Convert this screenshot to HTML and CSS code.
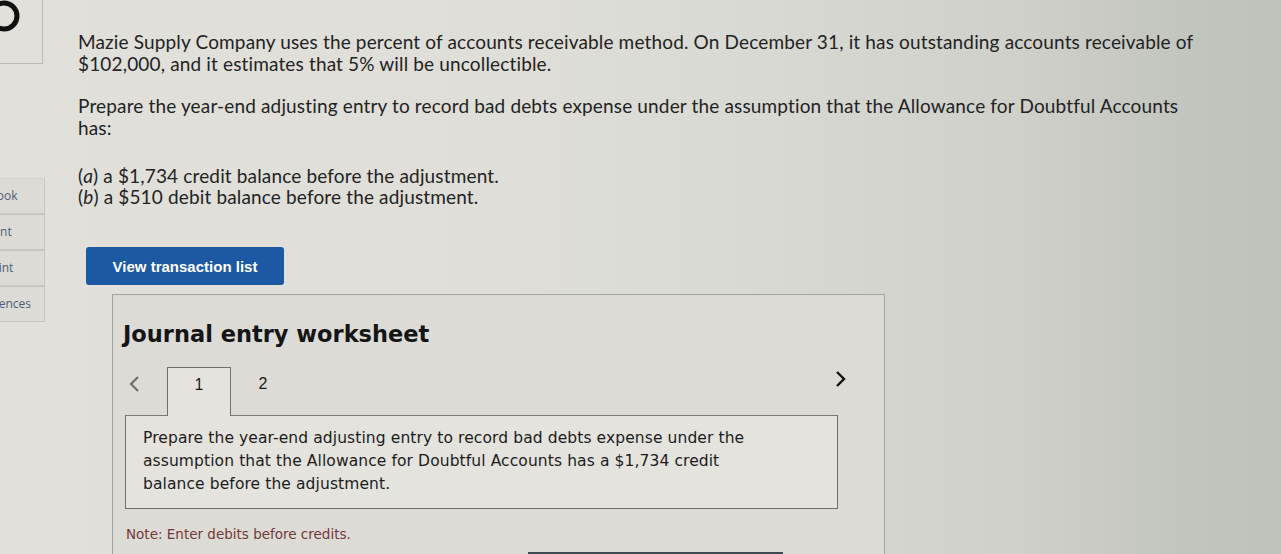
FILE: index.html
```html
<!DOCTYPE html>
<html lang="en">
<head>
<meta charset="utf-8">
<title>Journal entry worksheet</title>
<link rel="stylesheet" href="styles.css">
</head>
<body>
<div class="page">
  <aside class="side">
    <div class="side-top">
      <svg class="ring" width="44" height="63" viewBox="0 0 44 63" aria-hidden="true">
        <circle cx="4" cy="16" r="13" fill="none" stroke="#111" stroke-width="5"/>
      </svg>
    </div>
    <nav class="side-nav">
      <div class="side-item"><span>eBook</span></div>
      <div class="side-item"><span>Hint</span></div>
      <div class="side-item"><span>Print</span></div>
      <div class="side-item"><span>References</span></div>
    </nav>
  </aside>
  <main class="main">
    <p class="para p1">Mazie Supply Company uses the percent of accounts receivable method. On December 31, it has outstanding accounts receivable of $102,000, and it estimates that 5% will be uncollectible.</p>
    <p class="para p2">Prepare the year-end adjusting entry to record bad debts expense under the assumption that the Allowance for Doubtful Accounts has:</p>
    <ul class="cases">
      <li>(<i>a</i>) a $1,734 credit balance before the adjustment.</li>
      <li>(<i>b</i>) a $510 debit balance before the adjustment.</li>
    </ul>
    <button class="btn">View transaction list</button>
    <section class="sheet">
      <h2 class="sheet-title">Journal entry worksheet</h2>
      <div class="tabs">
        <div class="arrow prev">
          <svg width="14" height="18" viewBox="0 0 14 18" aria-hidden="true"><path d="M11 2 L4 9 L11 16" fill="none" stroke="#6a6a6a" stroke-width="2"/></svg>
        </div>
        <div class="tab active">1</div>
        <div class="tab">2</div>
        <div class="spacer"></div>
        <div class="arrow next">
          <svg width="14" height="18" viewBox="0 0 14 18" aria-hidden="true"><path d="M3 2 L10 9 L3 16" fill="none" stroke="#111" stroke-width="2.4"/></svg>
        </div>
      </div>
      <div class="task">Prepare the year-end adjusting entry to record bad debts expense under the assumption that the Allowance for Doubtful Accounts has a $1,734 credit balance before the adjustment.</div>
      <p class="note">Note: Enter debits before credits.</p>
      <div class="table-head"></div>
    </section>
  </main>
</div>
</body>
</html>
```
FILE: styles.css
```css
* { box-sizing: border-box; }
html, body { margin: 0; padding: 0; }
body {
  width: 1281px;
  height: 554px;
  overflow: hidden;
  background: linear-gradient(90deg, #e2e0da 0%, #dfded8 40%, #d9d9d3 60%, #cfd0ca 80%, #c3c5bf 92%, #bfc1bb 100%);
  color: #222;
}
.page {
  display: flex;
  align-items: flex-start;
}
.side {
  width: 45px;
  flex: none;
}
.side-top {
  width: 43px;
  height: 64px;
  border-right: 1px solid #bdbbb6;
  border-bottom: 1px solid #bdbbb6;
  overflow: hidden;
}
.ring { display: block; }
.side-nav {
  margin-top: 114px;
  width: 45px;
}
.side-item {
  display: flex;
  justify-content: flex-end;
  overflow: hidden;
  height: 36px;
  border: 1px solid #c9c7c3;
  border-left: none;
  border-top-color: #d3d1cc;
  background: #dddbd6;
}
.side-item + .side-item { border-top: 1px solid #c6c4bf; }
.side-item span {
  flex: none;
  width: 88px;
  text-align: center;
  font-family: "Open Sans", "DejaVu Sans", sans-serif;
  font-size: 12px;
  line-height: 34px;
  color: #4d5d78;
}
.main {
  margin-left: 33px;
  padding-top: 31px;
  width: 1125px;
}
.para {
  margin: 0;
  font-family: "Lato", "Liberation Sans", sans-serif;
  font-size: 19px;
  letter-spacing: 0.15px;
  line-height: 22px;
  color: #232323;
}
.p2 { margin-top: 20px; }
.cases {
  list-style: none;
  margin: 26px 0 0;
  padding: 0;
  font-family: "Lato", "Liberation Sans", sans-serif;
  font-size: 19px;
  letter-spacing: 0.15px;
  line-height: 21px;
  color: #232323;
}
.btn {
  display: block;
  margin: 40px 0 0 8px;
  width: 198px;
  height: 38px;
  border: none;
  border-radius: 3px;
  background: #1d59a2;
  color: #fff;
  font-family: "Liberation Sans", Arial, sans-serif;
  font-weight: bold;
  font-size: 15px;
  padding: 0;
}
.sheet {
  margin: 9px 0 0 34px;
  width: 773px;
  height: 280px;
  border: 1px solid #a3a39e;
  border-bottom: none;
  background: #dcdbd5;
  padding: 26px 24px 0 12px;
}
.sheet-title {
  margin: 0 0 0 -2px;
  font-family: "DejaVu Sans", Verdana, sans-serif;
  font-weight: bold;
  font-size: 22.5px;
  line-height: 26px;
  color: #151515;
}
.tabs {
  display: flex;
  align-items: stretch;
  height: 48px;
  margin-top: 20px;
  position: relative;
  z-index: 1;
}
.arrow {
  display: flex;
  align-items: flex-start;
  padding-top: 8px;
}
.prev { width: 42px; padding-left: 2px; }
.next { width: 26px; padding-top: 3px; }
.spacer { flex: 1; }
.tab {
  width: 64px;
  text-align: center;
  font-family: "Liberation Sans", Arial, sans-serif;
  font-size: 16px;
  line-height: 33px;
  color: #1a1a1a;
}
.tab.active {
  background: #e4e3de;
  border: 1px solid #6f6f6c;
  border-bottom: none;
  margin-bottom: -1px;
}
.task {
  width: 713px;
  border: 1px solid #6f6f6c;
  border-top-color: #7a7a76;
  background: #e4e3de;
  padding: 11px 70px 12px 17px;
  font-family: "DejaVu Sans", Verdana, sans-serif;
  font-size: 15.5px;
  letter-spacing: 0.1px;
  line-height: 23px;
  color: #1c1c1c;
}
.note {
  margin: 17px 0 0 1px;
  font-family: "DejaVu Sans", Verdana, sans-serif;
  font-size: 13.5px;
  line-height: 16px;
  color: #74383a;
}
.table-head {
  margin: 10px 0 0 403px;
  width: 255px;
  height: 6px;
  background: #3d4a50;
}
```
